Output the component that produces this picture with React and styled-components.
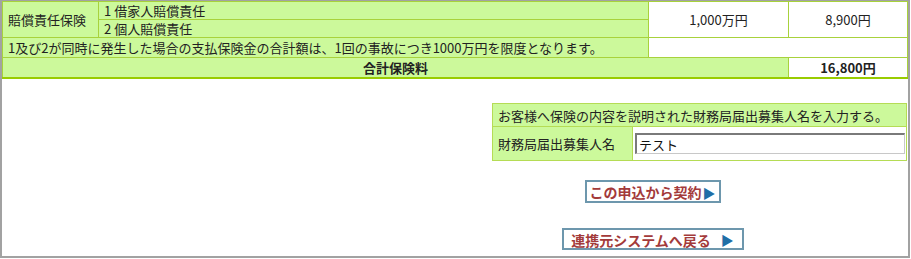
import React from "react";
import styled, { createGlobalStyle } from "styled-components";

const GlobalStyle = createGlobalStyle`
  html, body {
    margin: 0;
    padding: 0;
    background: #ffffff;
  }
  body {
    font-family: "Noto Sans CJK JP", "Liberation Sans", sans-serif;
    font-size: 13px;
    color: #222;
  }
`;

const Frame = styled.div`
  box-sizing: border-box;
  width: 910px;
  height: 258px;
  border: 2px solid #a2a2a2;
  border-top-width: 1px;
  background: #fff;
  overflow: hidden;
`;

const Table = styled.table`
  border-collapse: collapse;
  table-layout: fixed;
  width: 905px;
  border-bottom: 2px solid #99cc00;
`;

const Cell = styled.td`
  border: 1px solid #a8d23c;
  background: ${(p) => (p.$green ? "#ccf99b" : "#ffffff")};
  text-align: ${(p) => (p.$center ? "center" : "left")};
  font-weight: ${(p) => (p.$bold ? "bold" : "normal")};
  font-size: 13px;
  line-height: 17px;
  height: ${(p) => p.$h || 17}px;
  padding: 0 5px;
  white-space: nowrap;
  color: #222;
`;

const EntryArea = styled.div`
  display: flex;
  justify-content: flex-end;
  padding: 24px 1px 0 0;
`;

const EntryTable = styled.table`
  border-collapse: collapse;
  table-layout: fixed;
  width: 414px;
`;

const EntryCell = styled.td`
  border: 1px solid #b5dc55;
  background: ${(p) => (p.$green ? "#ccf99b" : "#ffffff")};
  padding: ${(p) => (p.$pad ? p.$pad : "0 5px")};
  height: ${(p) => p.$h}px;
  font-size: 13px;
  line-height: 17px;
  white-space: nowrap;
  color: #222;
`;

const NameInput = styled.input`
  box-sizing: border-box;
  width: 100%;
  height: 21px;
  margin: 0;
  padding: 1px 2px 0;
  font-family: "Noto Sans CJK JP", sans-serif;
  font-size: 13px;
  color: #111;
  background: #fff;
  border: 1px solid #c8c8c8;
  border-top: 2px solid #7a7a7a;
  border-left: 2px solid #7a7a7a;
  outline: none;
`;

const ButtonArea = styled.div`
  display: flex;
  flex-direction: column;
  align-items: center;
  gap: 25px;
  padding: 19px 0 0 395px;
`;

const LinkButton = styled.a`
  box-sizing: border-box;
  display: flex;
  align-items: center;
  justify-content: center;
  gap: ${(p) => p.$gap}px;
  width: ${(p) => p.$w}px;
  height: ${(p) => p.$h}px;
  border: 2px solid #6d97ad;
  background: #fff;
  color: #a33a3a;
  font-weight: bold;
  font-size: 14px;
  text-decoration: none;
  cursor: pointer;
  padding-top: 1px;
`;

const Arrow = styled.span`
  color: #1f6ea6;
  font-size: 13px;
  line-height: 1;
`;

export default function App() {
  return (
    <>
      <GlobalStyle />
      <Frame>
        <Table>
          <colgroup>
            <col style={{ width: 96 }} />
            <col style={{ width: 550 }} />
            <col style={{ width: 140 }} />
            <col style={{ width: 119 }} />
          </colgroup>
          <tbody>
            <tr>
              <Cell $green rowSpan={2}>賠償責任保険</Cell>
              <Cell $green>1 借家人賠償責任</Cell>
              <Cell rowSpan={2} $center>1,000万円</Cell>
              <Cell rowSpan={2} $center>8,900円</Cell>
            </tr>
            <tr>
              <Cell $green>2 個人賠償責任</Cell>
            </tr>
            <tr>
              <Cell $green colSpan={2} $h={19}>
                1及び2が同時に発生した場合の支払保険金の合計額は、1回の事故につき1000万円を限度となります。
              </Cell>
              <Cell colSpan={2} />
            </tr>
            <tr>
              <Cell $green colSpan={3} $center $bold $h={19}>合計保険料</Cell>
              <Cell $center $bold $h={19}>16,800円</Cell>
            </tr>
          </tbody>
        </Table>

        <EntryArea>
          <EntryTable>
            <colgroup>
              <col style={{ width: 140 }} />
              <col style={{ width: 274 }} />
            </colgroup>
            <tbody>
              <tr>
                <EntryCell $green colSpan={2} $h={22}>
                  お客様へ保険の内容を説明された財務局届出募集人名を入力する。
                </EntryCell>
              </tr>
              <tr>
                <EntryCell $green $h={33}>財務局届出募集人名</EntryCell>
                <EntryCell $h={33} $pad="0 1px 0 2px">
                  <NameInput defaultValue="テスト" />
                </EntryCell>
              </tr>
            </tbody>
          </EntryTable>
        </EntryArea>

        <ButtonArea>
          <LinkButton $w={136} $h={23} $gap={1}>
            この申込から契約<Arrow>▶</Arrow>
          </LinkButton>
          <LinkButton $w={182} $h={22} $gap={10}>
            連携元システムへ戻る<Arrow>▶</Arrow>
          </LinkButton>
        </ButtonArea>
      </Frame>
    </>
  );
}
